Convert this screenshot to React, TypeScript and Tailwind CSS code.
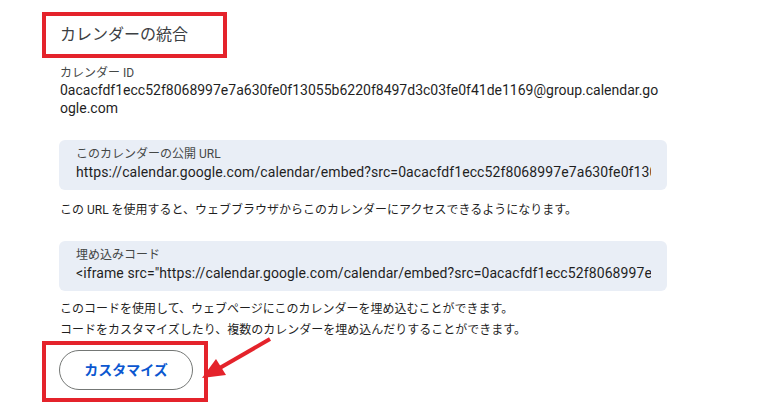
const calendarID =
  "0acacfdf1ecc52f8068997e7a630fe0f13055b6220f8497d3c03fe0f41de1169@group.calendar.google.com";

const publicURL = `https://calendar.google.com/calendar/embed?src=${encodeURIComponent(
  calendarID
)}&ctz=Asia%2FTokyo`;

const embedCode = `<iframe src="https://calendar.google.com/calendar/embed?src=${encodeURIComponent(
  calendarID
)}&ctz=Asia%2FTokyo" style="border: 0" width="800" height="600" frameborder="0" scrolling="no"></iframe>`;

interface CopyFieldProps {
  label: string;
  value: string;
}

function CopyField(props: CopyFieldProps) {
  return (
    <div className="w-[608px] rounded-md bg-[#e9eef6] pl-[17px] pr-[16px] pt-[6px] pb-[8px]">
      <div className="text-[12px] leading-4 text-[#444746]">{props.label}</div>
      <div className="overflow-hidden whitespace-nowrap text-[14px] leading-5 tracking-[0.1px] text-[#1f1f1f]">
        {props.value}
      </div>
    </div>
  );
}

export default function App() {
  return (
    <div
      className="relative h-[414px] w-[764px] overflow-hidden bg-white pl-[42px]"
      style={{ fontFamily: 'Roboto, "Noto Sans CJK JP", sans-serif' }}
    >
      {/* Heading (highlighted) */}
      <div className="mt-[12px] flex h-[46px] w-[185px] items-center border-4 border-[#e4232b] pl-[14px]">
        <h2 className="text-[16px] leading-5 text-[#3c4043]">カレンダーの統合</h2>
      </div>

      <div className="pl-[18px]">
        {/* Calendar ID */}
        <div className="mt-[7px] text-[12px] leading-4 text-[#444746]">カレンダー ID</div>
        <div className="w-[604px] break-all text-[14px] leading-[18px] text-[#1f1f1f]">
          {calendarID}
        </div>

        {/* Public URL */}
        <div className="mt-[23px] -ml-[1px]">
          <CopyField label="このカレンダーの公開 URL" value={publicURL} />
        </div>
        <p className="mt-[11px] text-[12px] leading-[18px] text-[#1f1f1f]">
          この URL を使用すると、ウェブブラウザからこのカレンダーにアクセスできるようになります。
        </p>

        {/* Embed code */}
        <div className="mt-[22px] -ml-[1px]">
          <CopyField label="埋め込みコード" value={embedCode} />
        </div>
        <p className="mt-[8px] text-[12px] leading-[21px] text-[#1f1f1f]">
          このコードを使用して、ウェブページにこのカレンダーを埋め込むことができます。
        </p>
        <p className="text-[12px] leading-[21px] text-[#1f1f1f]">
          コードをカスタマイズしたり、複数のカレンダーを埋め込んだりすることができます。
        </p>
      </div>

      {/* Customize button (highlighted) */}
      <div className="h-[61px] w-[166px] border-4 border-[#e4232b] pl-[13px] pt-[5px]">
        <button className="h-[40px] w-[134px] rounded-full border border-[#747775] text-[14px] font-bold text-[#0b57d0]">
          カスタマイズ
        </button>
      </div>

      {/* Arrow annotation */}
      <svg className="absolute left-0 top-0" width="764" height="414" viewBox="0 0 764 414">
        <line x1="270" y1="339" x2="218" y2="369" stroke="#e4232b" strokeWidth="4" />
        <polygon points="202,378 216,359 226,375" fill="#e4232b" />
      </svg>
    </div>
  );
}
